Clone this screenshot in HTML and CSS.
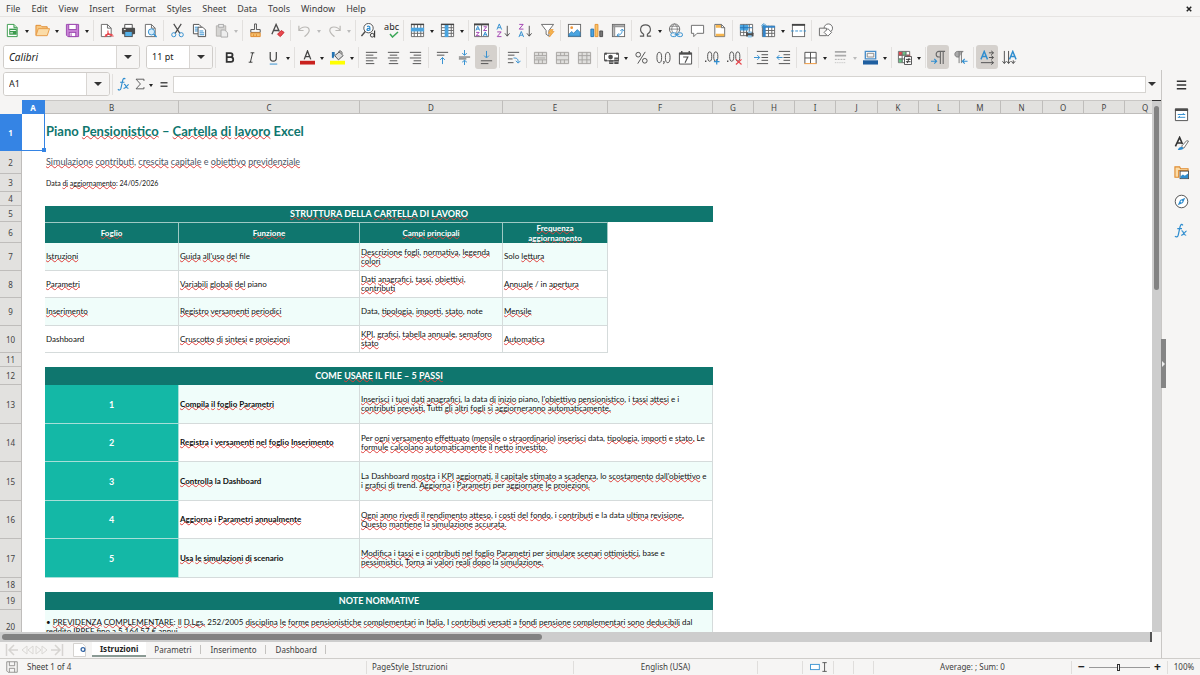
FILE: index.html
```html
<!DOCTYPE html>
<html lang="it">
<head>
<meta charset="utf-8">
<title>Piano Pensionistico</title>
<link rel="stylesheet" href="styles.css">
</head>
<body>
<svg class="defs" aria-hidden="true">
<symbol id="new" viewBox="0 0 16 16"><path d="M2.5 1.5h7l3.500 3.500v9.500H2.500z" fill="#fff" stroke="#3a9a4c"/><path d="M9.500 1.500V5H13" fill="#b9e3bf" stroke="#3a9a4c"/><rect x="4.500" y="6" width="8" height="6.500" fill="#3a9a4c"/><path d="M5.500 8h6M5.500 10.500h3" stroke="#fff"/></symbol>
<symbol id="open" viewBox="0 0 16 16"><path d="M1 13V2.500h5L7.500 4H13v2" fill="#f7c983" stroke="#e08a2e"/><path d="M1 13.500 3.500 6H15.500L13 13.500z" fill="#fbdca8" stroke="#e69a44"/></symbol>
<symbol id="save" viewBox="0 0 16 16"><path d="M1.500 1.500h13v13H3l-1.500-1.500z" fill="#c884d6" stroke="#9a45ae"/><rect x="4" y="1.500" width="8" height="5.500" fill="#fff" stroke="#9a45ae"/><rect x="4.500" y="10" width="7" height="4.500" fill="#fff" stroke="#9a45ae"/><path d="M6.500 11v3" stroke="#9a45ae"/></symbol>
<symbol id="pdf" viewBox="0 0 16 16"><path d="M2.500 1.500h6.500l4 4v9H2.500z" fill="#fff" stroke="#696969"/><path d="M9 1.500v4h4" fill="none" stroke="#696969"/><path d="M6 14.500c3-1 4-4 3.500-6.500M9.500 10c1 2.500 3 4 6 4M6.500 13c3-1.500 5-1.500 8-.5" fill="none" stroke="#e8484f" stroke-width="1.200"/></symbol>
<symbol id="print" viewBox="0 0 16 16"><path d="M4 1.500h8V6H4z" fill="#fff" stroke="#4d4d4d"/><rect x="1" y="5" width="14" height="7" rx="1" fill="#4d4d4d"/><rect x="4" y="9" width="8" height="5.500" fill="#56b2ea" stroke="#4d4d4d"/><path d="M3 7h2" stroke="#fff"/></symbol>
<symbol id="preview" viewBox="0 0 16 16"><path d="M2.500 1.500h6.500l4 4v9H2.500z" fill="#fff" stroke="#696969"/><path d="M9 1.500v4h4" fill="none" stroke="#696969"/><circle cx="9" cy="9.500" r="3.300" fill="#d6ecfa" stroke="#2f8dcf"/><path d="m11.500 12 3 3" stroke="#2f8dcf" stroke-width="1.500"/></symbol>
<symbol id="cut" viewBox="0 0 16 16"><path d="M4 1l6.500 10M12 1 5.500 11" stroke="#4d4d4d" stroke-width="1.300"/><circle cx="4" cy="12.500" r="2.200" fill="none" stroke="#2f8dcf"/><circle cx="12" cy="12.500" r="2.200" fill="none" stroke="#2f8dcf"/></symbol>
<symbol id="copy" viewBox="0 0 16 16"><path d="M1.500 1.500h6l2 2v8h-8z" fill="#fff" stroke="#4d4d4d"/><path d="M3 4.500h4M3 6.500h4M3 8.500h4" stroke="#2f8dcf"/><path d="M6.500 4.500h5l3 3v7h-8z" fill="#fff" stroke="#4d4d4d"/><path d="M8 8.500h4M8 10.500h5M8 12.500h5" stroke="#2f8dcf"/></symbol>
<symbol id="paste" viewBox="0 0 16 16"><path d="M2.500 3h10v11h-10z" fill="#d5d4d2" stroke="#b3b1ae"/><rect x="5" y="1.500" width="5" height="3" fill="#eee" stroke="#aaa"/><path d="M7.500 7.500h4l3 3v4.500h-7z" fill="#eee" stroke="#aaa"/></symbol>
<symbol id="brush" viewBox="0 0 16 16"><path d="M7 1h2v6h4v3H3V7h4z" fill="#fff" stroke="#4d4d4d"/><path d="M3 10.500h10v4H3z" fill="#f5c06f" stroke="#e08a2e"/><path d="M6 12v2M9 12v2" stroke="#e08a2e"/></symbol>
<symbol id="clear" viewBox="0 0 16 16"><path d="M2 12 6.500 1.500 10 9M4 8h5" fill="none" stroke="#4d4d4d" stroke-width="1.400"/><path d="m8 12 4-4 3 2-4 4.500z" fill="#e8484f" stroke="#c9252d"/></symbol>
<symbol id="undo" viewBox="0 0 16 16"><path d="M2 3v5h5M2 8c3-5 11-5 11 0 0 2.500-2 4-5 6.500" fill="none" stroke="#bbb9b6" stroke-width="1.300"/></symbol>
<symbol id="redo" viewBox="0 0 16 16"><path d="M14 3v5H9M14 8C11 3 3 3 3 8c0 2.500 2 4 5 6.500" fill="none" stroke="#bbb9b6" stroke-width="1.300"/></symbol>
<symbol id="row" viewBox="0 0 16 16"><path d="M1.500 1.500h13v13h-13zM1.500 11h13M4.500 1.500v13M8 1.500v13M11.500 1.500v13" fill="#fff" stroke="#696969"/><path d="M1 5h14v4H1z" fill="#4ba5e0"/><path d="M1 1.500h14" stroke="#444" stroke-width="1.500"/></symbol>
<symbol id="col" viewBox="0 0 16 16"><path d="M1.500 1.500h13v13h-13zM1.500 5h13M1.500 8h13M1.500 11h13M12 1.500v13" fill="#fff" stroke="#696969"/><path d="M5 1h4v14H5z" fill="#4ba5e0"/><path d="M1 1.500h14" stroke="#444" stroke-width="1.500"/></symbol>
<symbol id="filter" viewBox="0 0 16 16"><path d="M1.500 1.500h13L9.500 8v6L6.500 12V8z" fill="#fff" stroke="#696969"/><path d="m11 7-2 4h2.500L10 15l5-6h-2.500L14 7z" fill="#f7b64f" stroke="#e8922f" stroke-width=".7"/></symbol>
<symbol id="image" viewBox="0 0 16 16"><rect x="1.500" y="1.500" width="13" height="13" fill="#fff" stroke="#696969"/><circle cx="5" cy="5" r="1.500" fill="#f0963a"/><path d="m2 14 0-2 3-3 2 2 4-4 3 3v4z" fill="#4ba5e0" stroke="#2574b3" stroke-width=".7"/></symbol>
<symbol id="chart" viewBox="0 0 16 16"><path d="M2 6.500h3v8H2z" fill="#4ba5e0" stroke="#2574b3"/><path d="M6.500 1.500h3v13h-3z" fill="#f8c46a" stroke="#e8922f"/><path d="M11.500 8.500h3v6h-3z" fill="#777" stroke="#4d4d4d"/></symbol>
<symbol id="pivot" viewBox="0 0 16 16"><rect x="1.500" y="1.500" width="13" height="13" fill="#fff" stroke="#696969"/><path d="M2 3.500h12M3.500 2v12" stroke="#999" stroke-width="2"/><path d="M7 13c4 0 5-3 5-6M10 8.500 12 6.500l2 2M8.500 11 6.500 13l2 1.500" fill="none" stroke="#2f8dcf"/></symbol>
<symbol id="omega" viewBox="0 0 16 16"><path d="M2 14h4v-2C1 9 2 2 8 2s7 7 2 10v2h4" fill="none" stroke="#555" stroke-width="1.200"/></symbol>
<symbol id="link" viewBox="0 0 16 16"><circle cx="7" cy="6.500" r="5.500" fill="#fff" stroke="#696969"/><path d="M1.500 6.500h11M7 1C3 4 3 9 7 12M7 1c4 3 4 8 0 11M2.500 3.500h9" fill="none" stroke="#696969" stroke-width=".8"/><rect x="3" y="10.500" width="6" height="4" rx="2" fill="#f6f5f4" stroke="#2f8dcf"/><rect x="9.500" y="10.500" width="6" height="4" rx="2" fill="#f6f5f4" stroke="#2f8dcf"/><path d="M7 12.500h5" stroke="#2f8dcf"/></symbol>
<symbol id="comment" viewBox="0 0 16 16"><path d="M1.500 2.500h13v8.500h-7L4 14.500V11H1.500z" fill="#fff" stroke="#696969"/></symbol>
<symbol id="header" viewBox="0 0 16 16"><path d="M3 1.500h7l3.500 3.500v9.500H3z" fill="#fff" stroke="#696969"/><path d="M4 2h5.500v3H4zM4 11.500h9V14H4z" fill="#f7b64f"/><path d="M10 1.500V5h3.500" fill="none" stroke="#696969"/></symbol>
<symbol id="area" viewBox="0 0 16 16"><path d="M1.500 1.500h13v12h-13zM1.500 10h13M5 1.500v12M8 1.500v12M11 1.500v12" fill="#fff" stroke="#696969"/><path d="M1 2h9v6H1z" fill="#4ba5e0"/><path d="M1 5h13M5 2v6" stroke="#2574b3"/><rect x="7.500" y="10" width="8" height="4.500" rx="1" fill="#4d4d4d"/><path d="M9.500 9h4v2h-4zM9.500 13h4v2.500h-4z" fill="#8cc8ef"/></symbol>
<symbol id="freeze" viewBox="0 0 16 16"><path d="M1.500 3.500h13v11h-13zM1.500 8h13M1.500 11h13M8 3v12M11.500 3v12" fill="#fff" stroke="#696969"/><path d="M2 3h3v12H2zM5 3h10v2H5z" fill="#3584c8"/><path d="M3 0v6M0 3h6M1 1l4 4M5 1 1 5" stroke="#2f8dcf" stroke-width=".8"/></symbol>
<symbol id="split" viewBox="0 0 16 16"><rect x="1.500" y="1.500" width="13" height="13" fill="#fff" stroke="#696969"/><path d="M1 2h14" stroke="#444" stroke-width="2"/><path d="M0 8.500h16" stroke="#2f8dcf" stroke-dasharray="3 1.500"/></symbol>
<symbol id="draw" viewBox="0 0 16 16"><circle cx="11" cy="5.500" r="4.500" fill="#fff" stroke="#696969"/><path d="M1.500 5.500H9v8H1.500z" fill="#f6f5f4" stroke="#696969"/><path d="m10.500 6 4 4-4 4-4-4z" fill="#fff" stroke="#696969"/></symbol>
<symbol id="al" viewBox="0 0 16 16"><path d="M2 2.500h12M2 5.500h8M2 8.500h12M2 11.500h8M2 14.500h9" stroke="#4d4d4d"/></symbol>
<symbol id="ac" viewBox="0 0 16 16"><path d="M2 2.500h12M4 5.500h8M2 8.500h12M4 11.500h8M3 14.500h10" stroke="#4d4d4d"/></symbol>
<symbol id="ar" viewBox="0 0 16 16"><path d="M2 2.500h12M6 5.500h8M2 8.500h12M6 11.500h8M5 14.500h9" stroke="#4d4d4d"/></symbol>
<symbol id="vt" viewBox="0 0 16 16"><path d="M2 2.500h12M2 5.500h8" stroke="#4d4d4d"/><path d="M8 15V8M5.500 10.500 8 8l2.500 2.500" fill="none" stroke="#2f8dcf"/></symbol>
<symbol id="vm" viewBox="0 0 16 16"><path d="M2 7.500h12M2 9.500h8" stroke="#4d4d4d"/><path d="M8 0v5.500M5.500 3.500 8 5.500l2.500-2M8 16v-5M5.500 13 8 11l2.500 2" fill="none" stroke="#2f8dcf"/></symbol>
<symbol id="vb" viewBox="0 0 16 16"><path d="M2 11.500h12M2 14.500h8" stroke="#4d4d4d"/><path d="M8 1v7M5.500 6 8 8.500 10.500 6" fill="none" stroke="#2f8dcf"/></symbol>
<symbol id="wrap" viewBox="0 0 16 16"><path d="M2 2.500h12M2 5.500h7M2 9.500h5M2 13.500h6" stroke="#4d4d4d"/><path d="M8 8.500c4 0 5 1 5 5M10.500 11.500l2.500 2.500 2.500-2.500" fill="none" stroke="#2f8dcf"/></symbol>
<symbol id="merge" viewBox="0 0 16 16"><path d="M1.500 2.500h13v12h-13zM1.500 6h13M1.500 10.500h13M6 2.500V6M10 2.500V6M6 10.500v4M10 10.500v4" fill="#e0dfdd" stroke="#a5a3a0"/><path d="M3 8.500h10" stroke="#a5a3a0"/></symbol>
<symbol id="merge2" viewBox="0 0 16 16"><path d="M1.500 2.500h13v12h-13zM1.500 6h13M1.500 10.500h13M6 2.500V6M10 2.500V6M6 10.500v4M10 10.500v4" fill="#e0dfdd" stroke="#a5a3a0"/></symbol>
<symbol id="merge3" viewBox="0 0 16 16"><path d="M1.500 2.500h13v12h-13zM1.500 6h13M1.500 10.500h13M5.500 2.500v12M10.500 2.500v12" fill="#e0dfdd" stroke="#a5a3a0"/></symbol>
<symbol id="money" viewBox="0 0 16 16"><path d="M.5 3.500h15v8H.5z" fill="#fff" stroke="#4d4d4d"/><circle cx="7" cy="7.500" r="2.500" fill="#4d4d4d"/><path d="M1 4h2M13 4h2M1 11h2" stroke="#4d4d4d" stroke-width="2"/><path d="M5.500 11h4.500v4H5.500zM11 8h4.500v7H11z" fill="#4d4d4d"/><path d="M6 13h4M11 10h4M11 12.500h4" stroke="#ddd" stroke-width=".7"/></symbol>
<symbol id="pct" viewBox="0 0 16 16"><circle cx="4.500" cy="5" r="2.500" fill="none" stroke="#4d4d4d"/><circle cx="11.500" cy="11.500" r="2.500" fill="none" stroke="#4d4d4d"/><path d="M12 2 4 14.500" stroke="#4d4d4d"/></symbol>
<symbol id="num" viewBox="0 0 16 16"><g fill="none" stroke="#4d4d4d"><ellipse cx="3.500" cy="8" rx="2.500" ry="5.500"/><ellipse cx="12.500" cy="8" rx="2.500" ry="5.500"/></g><path d="M7.500 12.500h1.500l-1 2.500" stroke="#4d4d4d" fill="none"/></symbol>
<symbol id="date" viewBox="0 0 16 16"><path d="M1.500 3h13v12h-13z" fill="#fff" stroke="#4d4d4d"/><path d="M1.500 4h13" stroke="#4d4d4d" stroke-width="2"/><path d="M4 1v3M12 1v3" stroke="#4d4d4d" stroke-width="1.500"/><path d="M5.500 7.500h5l-3 6" fill="none" stroke="#4d4d4d" stroke-width="1.200"/></symbol>
<symbol id="dadd" viewBox="0 0 16 16"><g fill="none" stroke="#4d4d4d"><ellipse cx="5" cy="7" rx="2.200" ry="5"/><ellipse cx="11.500" cy="7" rx="2.200" ry="5"/></g><path d="M0 12h1.500" stroke="#4d4d4d" stroke-width="1.500"/><path d="M12.500 9.500v6M9.500 12.500h6" stroke="#2f8dcf" stroke-width="1.300"/></symbol>
<symbol id="ddel" viewBox="0 0 16 16"><g fill="none" stroke="#4d4d4d"><ellipse cx="5" cy="7" rx="2.200" ry="5"/><ellipse cx="11.500" cy="7" rx="2.200" ry="5"/></g><path d="M0 12h1.500" stroke="#4d4d4d" stroke-width="1.500"/><path d="m9.500 10 6 5.500M15.500 10l-6 5.500" stroke="#e8484f" stroke-width="1.300"/></symbol>
<symbol id="ind" viewBox="0 0 16 16"><path d="M3 1.500h12M8 5h7M8 8h7M8 11h7M3 14.500h12" stroke="#4d4d4d"/><path d="M0 8h6M3.500 5.500 6 8l-2.500 2.500" fill="none" stroke="#2f8dcf"/></symbol>
<symbol id="outd" viewBox="0 0 16 16"><path d="M3 1.500h12M8 5h7M8 8h7M8 11h7M3 14.500h12" stroke="#4d4d4d"/><path d="M7 8H1M3.500 5.500 1 8l2.500 2.500" fill="none" stroke="#2f8dcf"/></symbol>
<symbol id="border" viewBox="0 0 16 16"><path d="M2 14.500v-12h12v12M8 2.500v12M2 8.500h12" fill="#fff" stroke="#4d4d4d"/><path d="M1.500 14.500h13" stroke="#f0963a"/></symbol>
<symbol id="bstyle" viewBox="0 0 16 16"><path d="M2 2h12M2 6h12" stroke="#aaa" stroke-width="2"/><path d="M2 10h12" stroke="#aaa" stroke-dasharray="2 1"/><path d="M2 13.500h12" stroke="#bbb" stroke-dasharray="1 1"/></symbol>
<symbol id="bcolor" viewBox="0 0 16 16"><path d="M2.500 1.500h11v8h-11z" fill="#fff" stroke="#4a8fca" stroke-width="1.500"/><path d="M4.500 3.500h7v4h-7z" fill="#f6f5f4" stroke="#888"/><path d="M0 11h16v4.500H0z" fill="#1f5fa0"/></symbol>
<symbol id="cond" viewBox="0 0 16 16"><path d="M1.500 1.500h12v12h-12z" fill="#fff" stroke="#696969"/><path d="M2 2h4v4H2zM10 5h4v4h-4z" fill="#e8484f"/><path d="M6 2h4v4H6zM2 9h4v4H2z" fill="#6cc287"/><path d="M1.500 5.500h12M1.500 9.500h12M5.500 1.500v12M9.500 1.500v12" stroke="#696969"/><path d="M8 7h7.500v8.500H8z" fill="#fff" stroke="#4d4d4d"/><path d="M9.500 10h5M9.500 12.500h5M13 8.500l-2 5.500" stroke="#333"/></symbol>
<symbol id="ltr" viewBox="0 0 16 16"><path d="M15 1.500H8.500c-4 0-4 6 0 6H10M10 2v13M13 2v13" fill="none" stroke="#696969" stroke-width="1.200"/><path d="M0 12h6M3.500 9.500 6 12l-2.500 2.500" fill="none" stroke="#2f8dcf" stroke-width="1.200"/></symbol>
<symbol id="rtl" viewBox="0 0 16 16"><path d="M11 1.500H5c-4 0-4 6 0 6h1.500z" fill="#aaa"/><path d="M11 1.500H5c-4 0-4 6 0 6h1.500M6.500 2v12M9 2v12" fill="none" stroke="#777"/><path d="M15.500 12H10M12.500 9.500 10 12l2.500 2.500" fill="none" stroke="#2f8dcf" stroke-width="1.200"/></symbol>
<symbol id="dh" viewBox="0 0 16 16"><path d="M1 10 4.500 1.500 8 10M2.500 7h4" fill="none" stroke="#2f8dcf" stroke-width="1.500"/><path d="M9.500 3H14M12 1l2.500 2L12 5M9.500 8H14M12 6l2.500 2L12 10M1 13.500h13M12 11.500l2.500 2-2.500 2" fill="none" stroke="#4d4d4d"/></symbol>
<symbol id="dv" viewBox="0 0 16 16"><path d="M8 10 11.500 1.500 15 10M9.500 7h4" fill="none" stroke="#2f8dcf" stroke-width="1.500"/><path d="M2.500 1v13M.5 12l2 2.500 2-2.500M7 1v13M5 12l2 2.500L9 12M12 11v3M10 12l2 2.500 2-2.500" fill="none" stroke="#4d4d4d"/></symbol>
<symbol id="bold" viewBox="0 0 16 16"><path d="M5 2.500v11M5 3.300h4c3 0 3 4.200 0 4.200H5M5 7.500h4.500c3.300 0 3.300 5.200 0 5.200H5" fill="none" stroke="#333" stroke-width="1.900"/></symbol>
<symbol id="ital" viewBox="0 0 16 16"><path d="M7 3h4M5 13h4M9.200 3 6.800 13" stroke="#333" fill="none"/></symbol>
<symbol id="under" viewBox="0 0 16 16"><path d="M4.500 2v6.500c0 4.500 6.500 4.500 6.500 0V2" fill="none" stroke="#444" stroke-width="1.300"/><path d="M4 15h8" stroke="#2f8dcf"/></symbol>
<symbol id="fcolor" viewBox="0 0 16 16"><path d="M4.500 10 8 1l3.500 9M5.500 7h5" fill="none" stroke="#444" stroke-width="1.400"/><path d="M0 11.500h16v4H0z" fill="#c9211e"/></symbol>
<symbol id="fill" viewBox="0 0 16 16"><path d="m5 6 5-4 4 4-5 4.500z" fill="#ddd" stroke="#4d4d4d"/><path d="M10 3c-2-3 3-3 3 1" fill="none" stroke="#4d4d4d"/><path d="M2 2h3v3L3.500 9 2 8z" fill="#2574b3"/><path d="M0 11.500h16v4H0z" fill="#ff0"/></symbol>
<symbol id="fx" viewBox="0 0 16 16"><path d="M9.500 2.500C7.500 0 6.500 3 6 6L4.500 13c-.5 2-2 2.500-3.500 1M3.500 6h5" fill="none" stroke="#2f8dcf" stroke-width="1.300"/><path d="M8 8.500c2-1 2 5 5 4.500M13.500 8.500c-2 0-3 5-6 4.500" fill="none" stroke="#2f8dcf" stroke-width="1.200"/></symbol>
<symbol id="sum" viewBox="0 0 16 16"><path d="M12.500 4.500v-2h-9l5 5.500-5 5.500h9v-2" fill="none" stroke="#4d4d4d"/></symbol>
<symbol id="eq" viewBox="0 0 16 16"><path d="M4 6.500h8M4 10.500h8" stroke="#4d4d4d" stroke-width="1.600"/></symbol>
<symbol id="menu" viewBox="0 0 16 16"><path d="M3 3.500h10M3 7.500h10M3 11.500h10" stroke="#333" stroke-width="1.500"/></symbol>
<symbol id="props" viewBox="0 0 16 16"><path d="M1.500 2h13v12.500h-13z" fill="#fff" stroke="#4d4d4d"/><path d="M1 3h14" stroke="#4d4d4d" stroke-width="2.500"/><path d="M4 8h8M4 11h8M9.500 6.500 11 8M6.500 9.500 5 11" stroke="#2f8dcf"/></symbol>
<symbol id="styles" viewBox="0 0 16 16"><path d="M1.500 11 6 1.500l3 7M3.500 7.500H9" fill="none" stroke="#333" stroke-width="1.700"/><path d="m8 11 5.500-6 2 .5L10.500 13z" fill="#fff" stroke="#696969"/><path d="M4 15c1-3 3-4 5-3s1 3-5 3z" fill="#2f8dcf"/></symbol>
<symbol id="gallery" viewBox="0 0 16 16"><path d="M1 13V2h5l1 2h8v2H5v7z" fill="#fbdca8" stroke="#e08a2e" stroke-width="1.200"/><rect x="6.500" y="6.500" width="9" height="8" fill="#fff" stroke="#4d4d4d"/><path d="m7 14v-2l2.500-2 2 1.500L15 9v5z" fill="#2f8dcf"/></symbol>
<symbol id="nav" viewBox="0 0 16 16"><circle cx="8" cy="8" r="6.700" fill="#fff" stroke="#4d4d4d"/><path d="M12 4 9.500 9.500 4 12l2.500-5.500z" fill="#2f8dcf"/><circle cx="8" cy="8" r="1" fill="#fff"/></symbol>
<symbol id="disk" viewBox="0 0 16 16"><path d="M2 2h12v12H3.500L2 12.500zM5 2v4.500h6V2M5 14v-4.500h6V14" fill="none" stroke="#8c8a88"/></symbol>
<symbol id="selmode" viewBox="0 0 20 16"><rect x="1.500" y="5" width="10" height="6" fill="#fff" stroke="#2f8dcf"/><path d="M15 3h5M15 13h5M17.500 3v10" stroke="#4d4d4d"/></symbol>
<symbol id="addsheet" viewBox="0 0 14 14"><path d="M.5.500h9l3 3v10H.5z" fill="#fff" stroke="#d5d3d0"/><circle cx="10" cy="6.500" r="1.900" fill="#fff" stroke="#3465a4" stroke-width="1.300"/></symbol>
<symbol id="first" viewBox="0 0 14 14"><path d="M1.500 1v12M9 2 4 7l5 5M4 7h9" fill="none" stroke="#d6d4d1" stroke-width="1.500"/></symbol>
<symbol id="prev" viewBox="0 0 14 14"><path d="M7 3 2 7l5 4zM13 3 8 7l5 4z" fill="none" stroke="#dad8d5"/></symbol>
<symbol id="next" viewBox="0 0 14 14"><path d="m1 3 5 4-5 4zM7 3l5 4-5 4z" fill="none" stroke="#dad8d5"/></symbol>
<symbol id="last" viewBox="0 0 14 14"><path d="M12.500 1v12M5 2l5 5-5 5M10 7H1" fill="none" stroke="#d6d4d1" stroke-width="1.500"/></symbol>
</svg>

<nav class="menubar">
<button>File</button><button>Edit</button><button>View</button><button>Insert</button><button>Format</button><button>Styles</button><button>Sheet</button><button>Data</button><button>Tools</button><button>Window</button><button>Help</button>
<button class="close" aria-label="Close document"><svg viewBox="0 0 8 8"><path d="m1 1 6 6M7 1 1 7" stroke="#222" stroke-width="2"/></svg></button>
</nav>

<div class="toolbar" role="toolbar" aria-label="Standard">
<button class="tb" aria-label="New"><svg><use href="#new"/></svg></button><button class="arr" aria-label="New options"></button>
<button class="tb" aria-label="Open"><svg><use href="#open"/></svg></button><button class="arr" aria-label="Open options"></button>
<button class="tb" aria-label="Save"><svg><use href="#save"/></svg></button><button class="arr" aria-label="Save options"></button><i class="sep"></i>
<button class="tb" aria-label="Export as PDF"><svg><use href="#pdf"/></svg></button>
<button class="tb" aria-label="Print"><svg><use href="#print"/></svg></button>
<button class="tb" aria-label="Print preview"><svg><use href="#preview"/></svg></button><i class="sep"></i>
<button class="tb" aria-label="Cut"><svg><use href="#cut"/></svg></button>
<button class="tb" aria-label="Copy"><svg><use href="#copy"/></svg></button>
<button class="tb" aria-label="Paste"><svg><use href="#paste"/></svg></button><button class="arr off" aria-label="Paste options"></button><i class="sep"></i>
<button class="tb" aria-label="Clone formatting"><svg><use href="#brush"/></svg></button>
<button class="tb" aria-label="Clear formatting"><svg><use href="#clear"/></svg></button><i class="sep"></i>
<button class="tb" aria-label="Undo"><svg><use href="#undo"/></svg></button><button class="arr off" aria-label="Undo options"></button>
<button class="tb" aria-label="Redo"><svg><use href="#redo"/></svg></button><button class="arr off" aria-label="Redo options"></button><i class="sep"></i>
<button class="tb" aria-label="Find and replace"><svg viewBox="0 0 16 16" fill="none"><circle cx="8" cy="5.500" r="5" fill="#fff" stroke="#4d4d4d"/><path d="m4.500 9-4 5" stroke="#4d4d4d" stroke-width="1.500"/><path d="M6.500 4c1-1 3-.8 3 .8V8M9.500 5.800c-4-.3-4 2.500-1.500 2.200 1 0 1.500-.8 1.500-1.500" stroke="#2f8dcf" stroke-width="1.200"/><circle cx="12" cy="13" r="2" stroke="#333"/><path d="M14.500 8v7.500" stroke="#333" stroke-width="1.200"/></svg></button>
<button class="tb spell" aria-label="Spelling"><span>abc</span><svg viewBox="0 0 10 7"><path d="m1 3 2.500 3L9 1" fill="none" stroke="#3aa656" stroke-width="1.500"/></svg></button><i class="sep"></i>
<button class="tb" aria-label="Row"><svg><use href="#row"/></svg></button><button class="arr" aria-label="Row options"></button>
<button class="tb" aria-label="Column"><svg><use href="#col"/></svg></button><button class="arr" aria-label="Column options"></button><i class="sep"></i>
<button class="tb" aria-label="Sort"><svg viewBox="0 0 16 16" fill="none"><path d="M.5 1.500h15v13H.5zM8 2v12" fill="#fff" stroke="#696969"/><path d="M0 1.500h16" stroke="#444" stroke-width="2"/><path d="M2 8l2-4.500L6 8M2.500 6.500h3M10 14l2-4.500 2 4.500M10.500 12.500h3" stroke="#2f8dcf"/><path d="M10.200 4h3.300l-3.300 4h3.600M2.200 10h3.300l-3.300 3.500h3.600" stroke="#a040b0"/></svg></button>
<button class="tb" aria-label="Sort ascending"><svg viewBox="0 0 16 16" fill="none"><path d="M1 7l2.500-6L6 7M2 5h3" stroke="#2f8dcf"/><path d="M1.300 9.500h4.200l-4.200 5h4.500" stroke="#a040b0"/><path d="M12 3v11M9.500 11l2.500 3 2.500-3" stroke="#4d4d4d"/></svg></button>
<button class="tb" aria-label="Sort descending"><svg viewBox="0 0 16 16" fill="none"><path d="M1 15l2.500-6L6 15M2 13h3" stroke="#2f8dcf"/><path d="M1.300 1.500h4.200l-4.200 5h4.500" stroke="#a040b0"/><path d="M12 3v11M9.500 11l2.500 3 2.500-3" stroke="#4d4d4d"/></svg></button>
<button class="tb" aria-label="AutoFilter"><svg><use href="#filter"/></svg></button><i class="sep"></i>
<button class="tb" aria-label="Image"><svg><use href="#image"/></svg></button>
<button class="tb" aria-label="Chart"><svg><use href="#chart"/></svg></button>
<button class="tb" aria-label="Pivot table"><svg><use href="#pivot"/></svg></button><i class="sep"></i>
<button class="tb" aria-label="Special character"><svg><use href="#omega"/></svg></button><button class="arr" aria-label="Character options"></button>
<button class="tb" aria-label="Hyperlink"><svg><use href="#link"/></svg></button>
<button class="tb" aria-label="Comment"><svg><use href="#comment"/></svg></button>
<button class="tb" aria-label="Headers and footers"><svg><use href="#header"/></svg></button><i class="sep"></i>
<button class="tb" aria-label="Print area"><svg><use href="#area"/></svg></button>
<button class="tb" aria-label="Freeze"><svg><use href="#freeze"/></svg></button><button class="arr" aria-label="Freeze options"></button>
<button class="tb" aria-label="Split window"><svg><use href="#split"/></svg></button><i class="sep"></i>
<button class="tb" aria-label="Draw functions"><svg><use href="#draw"/></svg></button>
</div>

<div class="toolbar format" role="toolbar" aria-label="Formatting">
<div class="combo font"><input aria-label="Font name" value="Calibri"><button aria-label="Font list"></button></div>
<div class="combo size"><input aria-label="Font size" value="11 pt"><button aria-label="Size list"></button></div><i class="sep"></i>
<button class="tb" aria-label="Bold"><svg><use href="#bold"/></svg></button>
<button class="tb" aria-label="Italic"><svg><use href="#ital"/></svg></button>
<button class="tb" aria-label="Underline"><svg><use href="#under"/></svg></button><button class="arr" aria-label="Underline options"></button><i class="sep"></i>
<button class="tb" aria-label="Font colour"><svg><use href="#fcolor"/></svg></button><button class="arr" aria-label="Font colours"></button>
<button class="tb" aria-label="Background colour"><svg><use href="#fill"/></svg></button><button class="arr" aria-label="Background colours"></button><i class="sep"></i>
<button class="tb" aria-label="Align left"><svg><use href="#al"/></svg></button>
<button class="tb" aria-label="Align centre"><svg><use href="#ac"/></svg></button>
<button class="tb" aria-label="Align right"><svg><use href="#ar"/></svg></button><i class="sep"></i>
<button class="tb" aria-label="Align top"><svg><use href="#vt"/></svg></button>
<button class="tb" aria-label="Centre vertically"><svg><use href="#vm"/></svg></button>
<button class="tb on" aria-label="Align bottom" aria-pressed="true"><svg><use href="#vb"/></svg></button><i class="sep"></i>
<button class="tb" aria-label="Wrap text"><svg><use href="#wrap"/></svg></button><i class="sep"></i>
<button class="tb" aria-label="Merge and centre"><svg><use href="#merge"/></svg></button>
<button class="tb" aria-label="Merge"><svg><use href="#merge2"/></svg></button>
<button class="tb" aria-label="Unmerge"><svg><use href="#merge3"/></svg></button><i class="sep"></i>
<button class="tb" aria-label="Currency"><svg><use href="#money"/></svg></button><button class="arr" aria-label="Currencies"></button>
<button class="tb" aria-label="Percent"><svg><use href="#pct"/></svg></button>
<button class="tb" aria-label="Number"><svg><use href="#num"/></svg></button>
<button class="tb" aria-label="Date"><svg><use href="#date"/></svg></button><i class="sep"></i>
<button class="tb" aria-label="Add decimal"><svg><use href="#dadd"/></svg></button>
<button class="tb" aria-label="Delete decimal"><svg><use href="#ddel"/></svg></button><i class="sep"></i>
<button class="tb" aria-label="Increase indent"><svg><use href="#ind"/></svg></button>
<button class="tb" aria-label="Decrease indent"><svg><use href="#outd"/></svg></button><i class="sep"></i>
<button class="tb" aria-label="Borders"><svg><use href="#border"/></svg></button><button class="arr" aria-label="Border options"></button>
<button class="tb" aria-label="Border style"><svg><use href="#bstyle"/></svg></button><button class="arr off" aria-label="Border styles"></button>
<button class="tb" aria-label="Border colour"><svg><use href="#bcolor"/></svg></button><button class="arr" aria-label="Border colours"></button><i class="sep"></i>
<button class="tb" aria-label="Conditional formatting"><svg><use href="#cond"/></svg></button><button class="arr" aria-label="Conditional options"></button><i class="sep"></i>
<button class="tb on" aria-label="Left to right" aria-pressed="true"><svg><use href="#ltr"/></svg></button>
<button class="tb" aria-label="Right to left"><svg><use href="#rtl"/></svg></button><i class="sep"></i>
<button class="tb on" aria-label="Horizontal text" aria-pressed="true"><svg><use href="#dh"/></svg></button>
<button class="tb" aria-label="Vertical text"><svg><use href="#dv"/></svg></button>
</div>

<div class="work">
<main class="doc">
<div class="formula">
<div class="combo name"><input aria-label="Name box" value="A1"><button aria-label="Names"></button></div><i class="sep"></i>
<button class="fb" aria-label="Function wizard"><svg><use href="#fx"/></svg></button><button class="fb narrow" aria-label="Sum"><svg><use href="#sum"/></svg></button><button class="arr" aria-label="Sum options"></button><button class="fb" aria-label="Formula"><svg><use href="#eq"/></svg></button>
<input class="line" aria-label="Input line"><button class="arr big" aria-label="Expand formula bar"></button>
</div>
<div class="view">
<div class="cells">
<table class="sheet">
<colgroup><col class="w-h"><col class="w-a"><col class="w-b"><col class="w-c"><col class="w-d"><col class="w-e"><col class="w-e"><col class="w-g" span="2"><col class="w-g"><col class="w-j"><col class="w-g" span="3"><col class="w-j"><col class="w-g" span="3"></colgroup>
<thead><tr><th class="corner"></th><th class="cur">A</th><th>B</th><th>C</th><th>D</th><th>E</th><th>F</th><th>G</th><th>H</th><th>I</th><th>J</th><th>K</th><th>L</th><th>M</th><th>N</th><th>O</th><th>P</th><th>Q</th></tr></thead>
<tbody>
<tr class="h37"><th class="cur">1</th><td class="active"></td><td class="title" colspan="5">Piano <u>Pensionistico</u> – <u>Cartella</u> <u>di</u> <u>lavoro</u> Excel</td></tr>
<tr class="h23"><th>2</th><td></td><td class="subtitle" colspan="5"><u>Simulazione</u> <u>contributi</u>, <u>crescita</u> <u>capitale</u> e <u>obiettivo</u> <u>previdenziale</u></td></tr>
<tr class="h18"><th>3</th><td></td><td class="update" colspan="5">Data <u>di</u> <u>aggiornamento</u>: 24/05/2026</td></tr>
<tr class="h14"><th>4</th></tr>
<tr class="h16"><th>5</th><td></td><td class="band" colspan="5"><u>STRUTTURA</u> DELLA <u>CARTELLA</u> DI <u>LAVORO</u></td></tr>
<tr class="h21"><th>6</th><td></td><td class="head"><u>Foglio</u></td><td class="head"><u>Funzione</u></td><td class="head"><u>Campi</u> <u>principali</u></td><td class="head"><div class="clip"><u>Frequenza</u><br><u>aggiornamento</u></div></td></tr>
<tr class="h28 mint"><th>7</th><td></td><td class="c"><u>Istruzioni</u></td><td class="c"><u>Guida</u> <u>all'uso</u> <u>del</u> file</td><td class="c"><u>Descrizione</u> <u>fogli</u>, <u>normativa</u>, <u>legenda</u><br><u>colori</u></td><td class="c">Solo <u>lettura</u></td></tr>
<tr class="h27"><th>8</th><td></td><td class="c"><u>Parametri</u></td><td class="c"><u>Variabili</u> <u>globali</u> <u>del</u> piano</td><td class="c"><u>Dati</u> <u>anagrafici</u>, <u>tassi</u>, <u>obiettivi</u>,<br><u>contributi</u></td><td class="c"><u>Annuale</u> / in <u>apertura</u></td></tr>
<tr class="h28 mint"><th>9</th><td></td><td class="c"><u>Inserimento</u></td><td class="c"><u>Registro</u> <u>versamenti</u> <u>periodici</u></td><td class="c">Data, <u>tipologia</u>, <u>importi</u>, <u>stato</u>, note</td><td class="c"><u>Mensile</u></td></tr>
<tr class="h27"><th>10</th><td></td><td class="c">Dashboard</td><td class="c"><u>Cruscotto</u> <u>di</u> <u>sintesi</u> e <u>proiezioni</u></td><td class="c"><u>KPI</u>, <u>grafici</u>, <u>tabella</u> <u>annuale</u>, <u>semaforo</u><br><u>stato</u></td><td class="c"><u>Automatica</u></td></tr>
<tr class="h14"><th>11</th></tr>
<tr class="h18"><th>12</th><td></td><td class="band" colspan="5">COME <u>USARE</u> IL FILE – 5 <u>PASSI</u></td></tr>
<tr class="h39 mint"><th>13</th><td></td><td class="step">1</td><td class="c b"><u>Compila</u> <u>il</u> <u>foglio</u> <u>Parametri</u></td><td class="c" colspan="3"><u>Inserisci</u> i <u>tuoi</u> <u>dati</u> <u>anagrafici</u>, la data <u>di</u> <u>inizio</u> piano, <u>l'obiettivo</u> <u>pensionistico</u>, i <u>tassi</u> <u>attesi</u> e i<br><u>contributi</u> <u>previsti.</u> Tutti <u>gli</u> <u>altri</u> <u>fogli</u> <u>si</u> <u>aggiorneranno</u> <u>automaticamente.</u></td></tr>
<tr class="h38"><th>14</th><td></td><td class="step">2</td><td class="c b"><u>Registra</u> i <u>versamenti</u> <u>nel</u> <u>foglio</u> <u>Inserimento</u></td><td class="c" colspan="3">Per <u>ogni</u> <u>versamento</u> <u>effettuato</u> (<u>mensile</u> o <u>straordinario</u>) <u>inserisci</u> data, <u>tipologia</u>, <u>importi</u> e <u>stato.</u> Le<br><u>formule</u> <u>calcolano</u> <u>automaticamente</u> <u>il</u> <u>netto</u> <u>investito.</u></td></tr>
<tr class="h39 mint"><th>15</th><td></td><td class="step">3</td><td class="c b"><u>Controlla</u> la Dashboard</td><td class="c" colspan="3">La Dashboard <u>mostra</u> i <u>KPI</u> <u>aggiornati</u>, <u>il</u> <u>capitale</u> <u>stimato</u> a <u>scadenza</u>, lo <u>scostamento</u> <u>dall'obiettivo</u> e<br>i <u>grafici</u> <u>di</u> trend. <u>Aggiorna</u> i <u>Parametri</u> per <u>aggiornare</u> <u>le</u> <u>proiezioni.</u></td></tr>
<tr class="h38"><th>16</th><td></td><td class="step">4</td><td class="c b"><u>Aggiorna</u> i <u>Parametri</u> <u>annualmente</u></td><td class="c" colspan="3"><u>Ogni</u> <u>anno</u> <u>rivedi</u> <u>il</u> <u>rendimento</u> <u>atteso</u>, i <u>costi</u> <u>del</u> <u>fondo</u>, i <u>contributi</u> e la data <u>ultima</u> <u>revisione.</u><br><u>Questo</u> <u>mantiene</u> la <u>simulazione</u> <u>accurata.</u></td></tr>
<tr class="h39 mint"><th>17</th><td></td><td class="step">5</td><td class="c b"><u>Usa</u> <u>le</u> <u>simulazioni</u> <u>di</u> scenario</td><td class="c" colspan="3"><u>Modifica</u> i <u>tassi</u> e i <u>contributi</u> <u>nel</u> <u>foglio</u> <u>Parametri</u> per <u>simulare</u> <u>scenari</u> <u>ottimistici</u>, base e<br><u>pessimistici.</u> <u>Torna</u> ai <u>valori</u> <u>reali</u> <u>dopo</u> la <u>simulazione.</u></td></tr>
<tr class="h14"><th>18</th></tr>
<tr class="h18"><th>19</th><td></td><td class="band" colspan="5">NOTE NORMATIVE</td></tr>
<tr class="h34 mint"><th>20</th><td></td><td class="c" colspan="5">• <u>PREVIDENZA</u> <u>COMPLEMENTARE</u>: <u>Il</u> <u>D.Lgs.</u> 252/2005 <u>disciplina</u> <u>le</u> <u>forme</u> <u>pensionistiche</u> <u>complementari</u> in <u>Italia.</u> I <u>contributi</u> <u>versati</u> a <u>fondi</u> <u>pensione</u> <u>complementari</u> <u>sono</u> <u>deducibili</u> dal<br><u>reddito</u> <u>IRPEF</u> <u>fino</u> a 5.164,57 € <u>annui</u>.</td></tr>
</tbody>
</table>
</div>
<div class="vscroll"><i></i></div>
<div class="hscroll"><i></i></div>
</div>
<div class="tabs">
<button aria-label="First sheet"><svg><use href="#first"/></svg></button><button aria-label="Previous sheet"><svg><use href="#prev"/></svg></button><button aria-label="Next sheet"><svg><use href="#next"/></svg></button><button aria-label="Last sheet"><svg><use href="#last"/></svg></button>
<button class="add" aria-label="Add sheet"><svg><use href="#addsheet"/></svg></button>
<button class="tab sel">Istruzioni</button><button class="tab">Parametri</button><button class="tab">Inserimento</button><button class="tab">Dashboard</button>
</div>
</main>
<aside class="side">
<button aria-label="Sidebar settings"><svg><use href="#menu"/></svg></button>
<button aria-label="Properties"><svg><use href="#props"/></svg></button>
<button aria-label="Styles"><svg><use href="#styles"/></svg></button>
<button aria-label="Gallery"><svg><use href="#gallery"/></svg></button>
<button aria-label="Navigator"><svg><use href="#nav"/></svg></button>
<button aria-label="Functions"><svg><use href="#fx"/></svg></button>
<div class="grip"></div>
</aside>
</div>

<footer class="status">
<span class="disk"><svg><use href="#disk"/></svg></span><span>Sheet 1 of 4</span><span class="line-l pad">PageStyle_Istruzioni</span><span class="line-l mid">English (USA)</span><span class="line-l"></span><span class="line-l mid"><svg class="mode"><use href="#selmode"/></svg></span><span class="line-l"></span><span class="line-l"></span><span class="line-l mid">Average: ; Sum: 0</span>
<span class="line-l zoom"><button aria-label="Zoom out">−</button><input type="range" aria-label="Zoom" min="0" max="100" value="49"><button aria-label="Zoom in">+</button></span><span class="line-l mid">100%</span>
</footer>
</body>
</html>
```
FILE: styles.css
```css
* { box-sizing: border-box; }
html, body { height: 100%; }
body {
  margin: 0;
  display: flex;
  flex-direction: column;
  overflow: hidden;
  background: #f6f5f4;
  color: #3d3d3d;
  font: 9px/12px "Noto Sans", sans-serif;
}
button, input { font: inherit; color: inherit; margin: 0; padding: 0; border: 0; background: none; border-radius: 0; outline: 0; }
svg { width: 16px; height: 16px; display: block; flex: none; }
.defs { position: absolute; width: 0; height: 0; }

.menubar { display: flex; gap: 11px; height: 17px; padding: 1px 8px 0 6px; border-bottom: 1px solid #e6e4e2; flex: none; }
.menubar .close { margin-left: auto; }
.close svg { width: 6px; height: 6px; }

.toolbar { display: flex; align-items: center; height: 27px; padding-left: 1px; flex: none; }
.tb { width: 22px; height: 24px; display: flex; align-items: center; justify-content: center; flex: none; border-radius: 3px; }
.tb svg { width: 15px; height: 15px; }
.tb.spell { flex-direction: column; align-items: flex-end; padding-right: 2px; line-height: 8px; color: #222; }
.spell svg { width: 10px; height: 7px; }
.on { background: #d5d1cd; }
.arr { width: 8px; height: 24px; display: flex; align-items: center; justify-content: center; flex: none; padding-top: 2px; }
.arr::after { content: ""; border: 2px solid transparent; border-top: 3px solid #222; border-bottom: 0; }
.arr.off::after { border-top-color: #bbb; }
.sep { width: 5px; height: 21px; flex: none; background: linear-gradient(#e2e0de, #e2e0de) center / 1px 100% no-repeat; }
.arr + .sep { width: 4px; }

.combo { display: flex; height: 24px; background: #fff; border: 1px solid #d0cdca; border-radius: 3px; flex: none; overflow: hidden; }
.combo input { flex: 1; min-width: 0; padding-left: 5px; background: #fff; color: #222; }
.combo button { width: 23px; background: #f6f5f4; border-left: 1px solid #d9d6d3; display: flex; align-items: center; justify-content: center; }
.combo button::after, .big::after { content: ""; border: 4px solid transparent; border-top: 4px solid #333; border-bottom: 0; }
.format { height: 26px; padding-left: 3px; }
.font { width: 137px; margin-right: 6px; font-size: 10px; font-style: italic; }
.size { width: 67px; }

.work { display: flex; flex: 1; min-height: 0; }
.doc { flex: 1; min-width: 0; display: flex; flex-direction: column; }
.formula { display: flex; align-items: center; height: 30px; padding: 0 4px 2px 3px; flex: none; }
.name { width: 107px; }
.fb { width: 18px; height: 24px; display: flex; align-items: center; justify-content: center; flex: none; }
.fb svg { width: 14px; height: 14px; }
.fb.narrow { width: 14px; }
.line { flex: 1; min-width: 0; height: 17px; background: #fff; border: 1px solid #d6d4d1; }
.arr.big { width: 11px; padding: 0; }

.view { flex: 1; min-height: 0; display: grid; grid-template-columns: minmax(0, 1fr) 9px; grid-template-rows: minmax(0, 1fr) 10px; }
.cells { overflow: hidden; background: #fff; }
.vscroll { background: #cdcdcd; padding: 5px 2px 0 2px; border-top: 1px solid #333; }
.vscroll i { display: block; height: 35%; border-radius: 3px; background: #828282; }
.hscroll { background: #cdcdcd; padding: 2px 0 2px 2px; border-right: 2px solid #555; }
.hscroll i { display: block; width: 47%; height: 6px; border-radius: 3px; background: #828282; }

.sheet { table-layout: fixed; border-collapse: separate; border-spacing: 0; width: 1px; font: 8px/9px Lato, sans-serif; color: #111; }
.w-h { width: 22px; } .w-a { width: 23px; } .w-b { width: 134px; } .w-c { width: 181px; } .w-d { width: 143px; } .w-e { width: 105px; }
.w-g { width: 41px; } .w-j { width: 42px; }
.sheet td { padding: 0 1px; white-space: nowrap; vertical-align: middle; }
.sheet th { padding: 0; background: #e2e1df; border-right: 1px solid #bfbdbb; border-bottom: 1px solid #bfbdbb; font: 8px/11px "Noto Sans", sans-serif; color: #444; vertical-align: middle; }
thead th { height: 14px; border-top: 1px solid #c9c7c5; }
.sheet .corner { background: #f6f5f4; border: 0; }
.sheet th.cur { background: #3584e4; border-color: #3584e4; color: #fff; font-weight: 700; }
.h14 { height: 14px; } .h16 { height: 16px; } .h18 { height: 18px; } .h21 { height: 21px; } .h23 { height: 23px; } .h27 { height: 27px; } .h28 { height: 28px; }
.h34 { height: 34px; } .h37 { height: 37px; } .h38 { height: 38px; } .h39 { height: 39px; }
.sheet .active { position: relative; border-right: 1px solid #3584e4; border-bottom: 1px solid #3584e4; }
.active::after { content: ""; position: absolute; right: -2px; bottom: -2px; width: 4px; height: 4px; background: #3584e4; }
.sheet .title { padding-bottom: 3px; font-size: 13px; line-height: 16px; font-weight: 700; color: #0f766e; }
.sheet .subtitle { padding-bottom: 2px; font-size: 9px; line-height: 11px; color: #4b5563; }
.update { font-size: 7px; }
.sheet .band, .sheet .head, .sheet .step { text-align: center; color: #fff; font-weight: 700; }
.sheet .band { padding-bottom: 2px; background: #0f766e; font-size: 9px; }
.head { background: #0f766e; font-size: 8px; line-height: 11px; border-right: 1px solid #9fc9c4; border-top: 1px solid #9fc9c4; }
.clip { height: 20px; display: flow-root; overflow: hidden; line-height: 10px; }
.step { background: #14b8a6; font-size: 9px; border-bottom: 1px solid #a7dfd8; border-right: 1px solid #a7dfd8; }
.c { border-right: 1px solid #d5dbdb; border-bottom: 1px solid #d5dbdb; }
.mint .c { background: #f0fdfa; }
.b { font-weight: 700; }
.sheet u { text-decoration: underline wavy #e0403c 1px; text-underline-offset: -1px; text-decoration-skip-ink: none; }

.tabs { height: 16px; display: flex; align-items: center; padding: 0 0 1px 5px; font-size: 8px; flex: none; }
.tabs button { height: 15px; display: flex; align-items: center; }
.tabs svg { width: 14px; height: 14px; }
.tabs button:not(.tab) { width: 15px; }
.tabs .add:not(.tab) { width: 19px; margin-left: 8px; }
.tabs .tab { padding: 0 8px; }
.tabs .sel { background: #fff; font-weight: 700; border-bottom: 2px solid #8a9a94; color: #222; }
.tab:not(.sel)::after { content: ""; width: 1px; height: 9px; margin-left: 8px; margin-right: -8px; background: #c4c2bf; }
.tab:not(.sel) + .tab { margin-left: 2px; }

.side { width: 39px; position: relative; border-left: 1px solid #c9c7c5; display: flex; flex-direction: column; align-items: center; gap: 5px; padding-top: 3px; flex: none; }
.side button { width: 24px; height: 24px; display: flex; align-items: center; justify-content: center; }
.side svg { width: 15px; height: 15px; }
.grip { position: absolute; left: -1px; top: 269px; width: 5px; height: 49px; background: #858585; }
.grip::after { content: ""; position: absolute; left: 1px; top: 22px; border: 3px solid transparent; border-left: 3px solid #eee; border-right: 0; }

.status { height: 17px; flex: none; display: grid; grid-template-columns: 27px 339fr 207fr 184fr 45px 31px 20px 20px 198fr 96px 33px; align-items: center; border-top: 1px solid #cfcdca; font-size: 8px; }
.status > span { height: 13px; display: flex; align-items: center; white-space: nowrap; }
.status .disk { padding-left: 5px; }
.disk svg { width: 14px; height: 14px; }
.line-l { border-left: 1px solid #e0dedc; }
.pad { padding-left: 5px; }
.mid { justify-content: center; }
.status .mode { width: 20px; height: 14px; }
.zoom { padding: 0 5px; gap: 3px; }
.zoom button { width: 9px; font-size: 12px; font-weight: 700; color: #222; }
.zoom input { flex: 1; min-width: 0; height: 10px; appearance: none; background: linear-gradient(#999, #999) center / 100% 1px no-repeat; }
.zoom input::-webkit-slider-thumb { appearance: none; width: 3px; height: 7px; background: #f6f5f4; border: 1px solid #333; }
```
